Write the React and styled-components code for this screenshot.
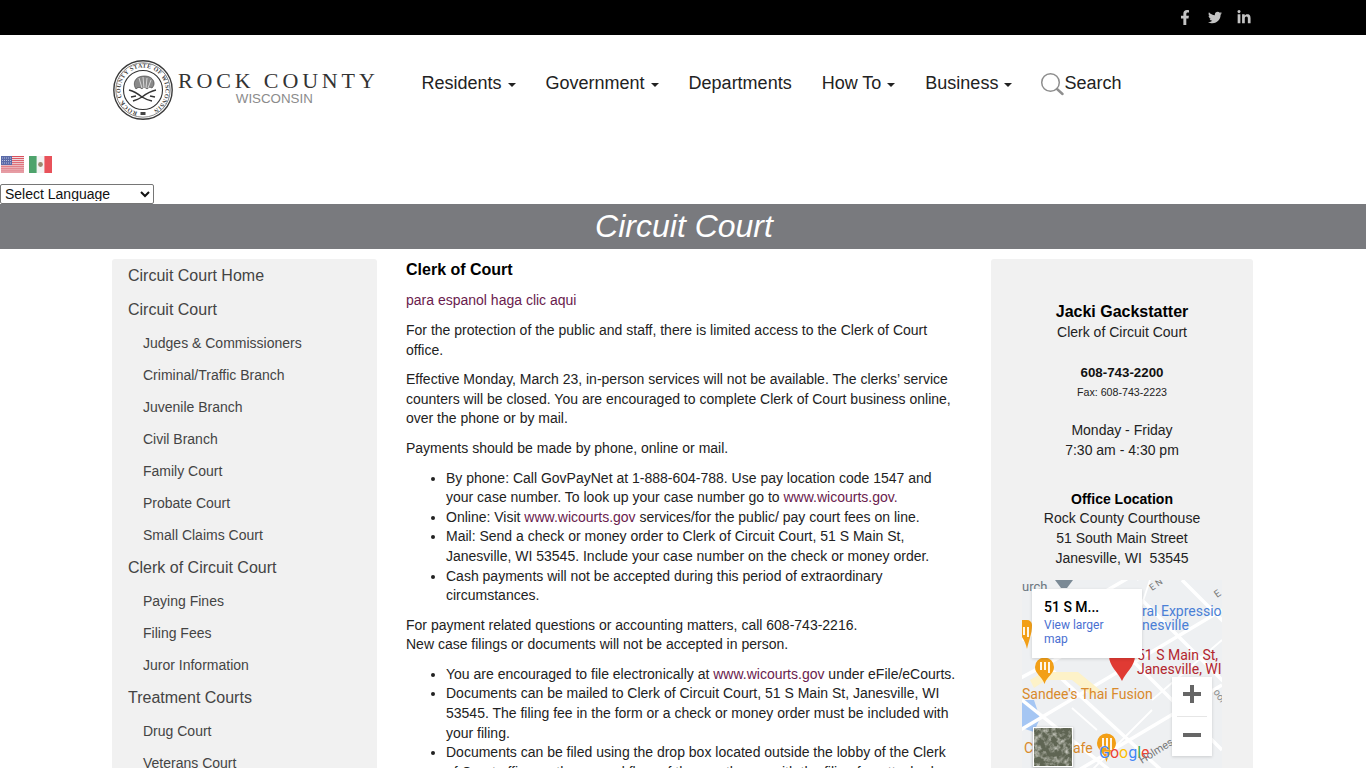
import React from 'react';
import styled, { createGlobalStyle } from 'styled-components';
import { FaFacebookF, FaTwitter, FaLinkedinIn } from 'react-icons/fa';

const GlobalStyle = createGlobalStyle`
  html, body {
    margin: 0;
    padding: 0;
    height: 100%;
    overflow: hidden;
    background: #fff;
  }
  body {
    font-family: "Liberation Sans", Arial, sans-serif;
    font-size: 14px;
    line-height: 1.4;
    color: #222;
  }
`;

const Page = styled.div`
  height: 768px;
  overflow: hidden;
`;

const TopBar = styled.div`
  height: 35px;
  background: #000;
  display: flex;
  justify-content: flex-end;
  align-items: center;
  gap: 15.5px;
  padding-right: 115px;
  color: #c4c4c4;
  font-size: 15px;
`;

const SocialLink = styled.a`
  display: flex;
  color: inherit;
  width: 14px;
  justify-content: center;
`;

const Header = styled.header`
  height: 97px;
  display: flex;
  align-items: center;
  padding-left: 113px;
`;

const Logo = styled.a`
  display: flex;
  align-items: center;
  width: 308.5px;
  flex: none;
  margin-top: 13px;
`;

const LogoText = styled.div`
  display: flex;
  flex-direction: column;
  align-items: center;
  margin-left: 5px;
  margin-top: -6px;
`;

const LogoTitle = styled.span`
  font-family: "Liberation Serif", serif;
  font-size: 22px;
  line-height: 23px;
  letter-spacing: 3.85px;
  color: #333;
  white-space: nowrap;
`;

const LogoSub = styled.span`
  font-size: 13.33px;
  line-height: 14px;
  color: #8b8b8b;
  margin-left: -8px;
`;

const Nav = styled.nav`
  display: flex;
  align-items: center;
  gap: 30px;
  font-size: 18px;
  color: #222;
`;

const NavItem = styled.a`
  display: flex;
  align-items: center;
  white-space: nowrap;
`;

const Caret = styled.span`
  display: inline-block;
  margin-left: 6px;
  margin-top: 2px;
  border-top: 4px solid #222;
  border-left: 4px solid transparent;
  border-right: 4px solid transparent;
`;

const SearchItem = styled(NavItem)`
  margin-left: -2px;
`;

const LanguageBar = styled.div`
  height: 72px;
  display: flex;
  flex-direction: column;
  justify-content: flex-end;
  align-items: flex-start;
`;

const Flags = styled.div`
  display: flex;
  gap: 5px;
  padding-left: 1px;
  margin-bottom: 11px;
`;

const LanguageSelect = styled.select`
  width: 154px;
  height: 20px;
  font-family: "Liberation Sans", Arial, sans-serif;
  font-size: 14px;
  line-height: 16px;
  padding: 0 0 2px;
  background: #fff;
  color: #111;
  border: 1px solid #767676;
  border-radius: 2px;
  display: block;
`;

const Banner = styled.div`
  height: 45px;
  background: #797a7e;
  color: #fff;
  font-size: 32px;
  font-style: italic;
  line-height: 45px;
  text-align: center;
  padding-left: 2px;
`;

const Columns = styled.div`
  display: grid;
  grid-template-columns: 265px 614px 262px;
  padding-left: 112px;
  padding-top: 10px;
  align-items: start;
`;

const SideMenu = styled.aside`
  background: #f1f1f1;
  border-radius: 3px;
  padding: 0 16px 30px;
`;

const MenuLink = styled.a`
  display: block;
  color: #444;
  font-size: ${(p) => (p.$sub ? '14px' : '16px')};
  line-height: ${(p) => (p.$sub ? '32px' : '34px')};
  padding-left: ${(p) => (p.$sub ? '15px' : '0')};
`;

const Main = styled.main`
  color: #222;
  padding: 1.4px 33px 0 29px;
`;

const Title = styled.h2`
  margin: 0 0 11px;
  font-size: 16px;
  line-height: 20px;
  font-weight: bold;
  color: #000;
`;

const Para = styled.p`
  margin: 0 0 10px;
`;

const BulletList = styled.ul`
  margin: 0 0 10px;
  padding-left: 40px;
`;

const TextLink = styled.a`
  color: #6a1b4d;
`;

const InfoPanel = styled.aside`
  background: #f1f1f1;
  border-radius: 3px;
  height: 600px;
  padding: 42px 31px 0;
  text-align: center;
`;

const InfoName = styled.div`
  font-size: 16px;
  font-weight: bold;
  line-height: 21.5px;
  color: #000;
`;

const InfoLine = styled.div`
  line-height: 19.6px;
  color: #222;
`;

const InfoGroup = styled.div`
  margin-bottom: ${(p) => p.$gap || 19}px;
`;

const Phone = styled.div`
  font-size: 13.33px;
  font-weight: bold;
  line-height: 20px;
  color: #111;
`;

const Fax = styled.div`
  font-size: 10.67px;
  line-height: 19.5px;
  color: #222;
`;

const InfoHeading = styled.div`
  font-weight: bold;
  line-height: 19.6px;
  color: #000;
`;

const MapBox = styled.div`
  position: relative;
  width: 200px;
  height: 200px;
  overflow: hidden;
  background: #eef0f2;
`;

const MapCard = styled.div`
  position: absolute;
  left: 10px;
  top: 9px;
  width: 110px;
  height: 69px;
  box-sizing: border-box;
  padding: 10px 12px;
  background: #fff;
  text-align: left;
  box-shadow: 0 1px 3px rgba(0, 0, 0, 0.15);
  font-family: Roboto, sans-serif;
`;

const MapCardTitle = styled.div`
  font-size: 14px;
  font-weight: 500;
  line-height: 16px;
  color: #000;
`;

const MapCardLink = styled.a`
  display: block;
  margin-top: 3px;
  font-size: 12px;
  line-height: 14px;
  color: #4a6fd1;
`;

const ZoomControl = styled.div`
  position: absolute;
  left: 150px;
  top: 97px;
  width: 40px;
  height: 79px;
  background: #fff;
  box-shadow: 0 1px 3px rgba(0, 0, 0, 0.15);
  display: flex;
  flex-direction: column;
  align-items: center;
`;

const ZoomButton = styled.div`
  height: 39px;
  width: 100%;
  box-sizing: border-box;
  padding-bottom: ${(p) => p.$lift}px;
  display: flex;
  align-items: center;
  justify-content: center;
`;

const ZoomDivider = styled.div`
  width: 30px;
  height: 1px;
  background: #e6e6e6;
`;

const Thumbnail = styled.div`
  position: absolute;
  left: 11px;
  top: 147px;
  width: 38px;
  height: 38px;
  border: 1px solid #fff;
  box-shadow: 0 1px 3px rgba(0, 0, 0, 0.3);
  overflow: hidden;
  display: flex;
`;

const menu = [
  ['Circuit Court Home'],
  ['Circuit Court', ['Judges & Commissioners', 'Criminal/Traffic Branch', 'Juvenile Branch', 'Civil Branch', 'Family Court', 'Probate Court', 'Small Claims Court']],
  ['Clerk of Circuit Court', ['Paying Fines', 'Filing Fees', 'Juror Information']],
  ['Treatment Courts', ['Drug Court', 'Veterans Court']],
];

const navItems = ['Residents', 'Government', 'Departments', 'How To', 'Business'];

// seal next to the county name
const Seal = () => (
  <svg width="60" height="60" viewBox="0 0 60 60">
    <defs>
      <path id="sealArc" d="M30 52.5 a22.5 22.5 0 1 1 0 -45 a22.5 22.5 0 1 1 0 45" />
    </defs>
    <circle cx="30" cy="30" r="29.2" fill="#fff" stroke="#3a3a3a" strokeWidth="1.4" />
    <circle cx="30" cy="30" r="27.2" fill="none" stroke="#555" strokeWidth="0.7" />
    <circle cx="30" cy="30" r="19.5" fill="#fff" stroke="#333" strokeWidth="1.1" />
    <text fontFamily="'Liberation Serif', serif" fontSize="6" fontWeight="bold" fill="#444">
      <textPath href="#sealArc" startOffset="4%" textLength="124" lengthAdjust="spacing">ROCK COUNTY STATE OF WISCONSIN</textPath>
    </text>
    <path d="M23 29c-3-4-2-10 3-12 5-2 12-1 14 3 2 3 1 6-1 8-2-1-3-1-5 1-2-2-4-2-5 0-2-2-4-2-6 0z" fill="#8a8a8a" stroke="#333" strokeWidth="0.6" />
    <path d="M26 18l3 10M30 17l1 11M34 18l-1 10M38 20l-3 8" stroke="#e8e8e8" strokeWidth="0.8" />
    <path d="M16 30c4 1 8 3 13 7 4-3 9-6 14-7M20 41c3-1 6-2 9-4 3 2 6 3 10 4M23 36l-5 1M37 36l5 1" fill="none" stroke="#333" strokeWidth="1.5" />
    <rect x="27.5" y="52" width="5" height="3" fill="#444" />
  </svg>
);

const UsFlag = () => (
  <svg width="23" height="17" viewBox="0 0 23 17">
    <rect width="23" height="17" fill="#f4f0f2" />
    {[0, 2, 4, 6, 8, 10, 12, 14, 16].map((y) => (
      <rect key={y} y={y * 1.03} width="23" height="1.1" fill="#d9505c" />
    ))}
    <rect width="11" height="9" fill="#5a6aa8" />
    <path d="M1 2h9M1 4.5h9M1 7h9" stroke="#cfd4ea" strokeWidth="0.8" strokeDasharray="1 1" />
  </svg>
);

const MxFlag = () => (
  <svg width="23" height="17" viewBox="0 0 23 17">
    <rect width="8" height="17" fill="#4ea36c" />
    <rect x="7.6" width="7.8" height="17" fill="#f3f3f3" />
    <rect x="15.4" width="7.6" height="17" fill="#e8525a" />
    <circle cx="11.5" cy="8.5" r="2.4" fill="#9a8a70" />
  </svg>
);

const SearchGlyph = () => (
  <svg width="24" height="24" viewBox="0 0 24 24" fill="none">
    <circle cx="10.5" cy="10.5" r="8.8" stroke="#8e8e8e" strokeWidth="1.5" />
    <path d="M17 17l5.5 5" stroke="#8e8e8e" strokeWidth="2.4" strokeLinecap="round" />
  </svg>
);

// hand-drawn copy of the embedded map tiles
const MapTiles = () => (
  <svg width="200" height="200" viewBox="0 0 200 200" style={{ display: 'block' }}>
    <rect width="200" height="200" fill="#eef0f2" />
    <path d="M0 120h12l6 18-6 14-12-4z" fill="#a5c6f3" />
    <g stroke="#fff" strokeWidth="3.5" fill="none">
      <path d="M-5 100L70 60M-5 152L200 30M40 200L200 105M0 60L120 -10" />
      <path d="M0 120L100 200M30 90L150 200M80 50L200 170M120 20L210 110M160 0L210 50" />
    </g>
    <g stroke="#fff" strokeWidth="1.8" fill="none">
      <path d="M115 0L125 -5M118 30L128 0M60 200L130 130M50 128L75 150M130 120L200 60" />
    </g>
    <path d="M8 100L22 92L56 92L78 110L70 116L50 100L24 100L12 108z" fill="#fdf2c8" />
    <path d="M33 0h18l-6 8h-6z" fill="#7b8a96" />
    <text x="0" y="11" fontFamily="Roboto, sans-serif" fontSize="13" fill="#6b7680">urch</text>
    <text x="130" y="11" fontFamily="Roboto, sans-serif" fontSize="9" fill="#777" transform="rotate(-35 130 11)">E N</text>
    <text x="195" y="18" fontFamily="Roboto, sans-serif" fontSize="10" fill="#777" transform="rotate(-35 195 18)">E</text>
    <text x="120" y="36" fontFamily="Roboto, sans-serif" fontSize="14" fill="#4a7fd6">ral Expression</text>
    <text x="120" y="50" fontFamily="Roboto, sans-serif" fontSize="14" fill="#4a7fd6">nesville</text>
    <text x="115" y="80" fontFamily="Roboto, sans-serif" fontSize="14" fill="#b3262e">51 S Main St,</text>
    <text x="115" y="94" fontFamily="Roboto, sans-serif" fontSize="14" fill="#b3262e">Janesville, WI</text>
    <text x="0" y="119" fontFamily="Roboto, sans-serif" fontSize="14" fill="#d98a2b">Sandee's Thai Fusion</text>
    <text x="2" y="173" fontFamily="Roboto, sans-serif" fontSize="14" fill="#d98a2b">Ca</text>
    <text x="51" y="173" fontFamily="Roboto, sans-serif" fontSize="14" fill="#d98a2b">afe</text>
    <path d="M0 40h5a5 5 0 0 1 5 5c0 9-3 15-5 24-1-5-3-9-5-12z" fill="#f29f17" />
    <path d="M2 47v8M6 47v10" stroke="#fff" strokeWidth="1.8" />
    <path d="M13 87a9.5 9.5 0 0 1 19 0c0 7-7 9-9.5 17-2.500-8-9.500-10-9.500-17z" fill="#f29f17" />
    <path d="M19 82v8M23 82v8M27 82v11" stroke="#fff" strokeWidth="1.8" />
    <path d="M75 163a9.500 9.500 0 0 1 19 0c0 7-7 9-9.500 19-2.500-10-9.500-12-9.500-19z" fill="#f29f17" />
    <path d="M81 158v9M85 158v9M89 158v12" stroke="#fff" strokeWidth="1.8" />
    <path d="M87 76L113 76C113 86 104 92 100 101C96 92 87 86 87 76z" fill="#e03a33" />
    <text fontFamily="Roboto, sans-serif" fontSize="16" y="178" x="77" stroke="#fff" strokeWidth="0.4" paintOrder="stroke">
      <tspan fill="#4285f4">G</tspan>
      <tspan fill="#ea4335">o</tspan>
      <tspan fill="#fbbc05">o</tspan>
      <tspan fill="#4285f4">g</tspan>
      <tspan fill="#34a853">l</tspan>
      <tspan fill="#ea4335">e</tspan>
    </text>
    <text x="120" y="184" fontFamily="Roboto, sans-serif" fontSize="11" fill="#777" transform="rotate(-32 120 184)">Holmes St</text>
    <text x="191" y="112" fontFamily="Roboto, sans-serif" fontSize="10" fill="#888" transform="rotate(55 191 112)">ool</text>
  </svg>
);

const SatelliteTile = () => (
  <svg width="38" height="38" viewBox="0 0 38 38">
    <filter id="satNoise">
      <feTurbulence type="fractalNoise" baseFrequency="0.17" numOctaves="3" seed="7" />
      <feColorMatrix values="0 0 0 0 0.74  0 0 0 0 0.74  0 0 0 0 0.68  2.2 0 0 0 -0.95" />
    </filter>
    <rect width="38" height="38" fill="#5f6553" />
    <rect width="38" height="38" filter="url(#satNoise)" />
  </svg>
);

const App = () => (
  <Page>
    <GlobalStyle />
    <TopBar>
      <SocialLink><FaFacebookF /></SocialLink>
      <SocialLink><FaTwitter /></SocialLink>
      <SocialLink><FaLinkedinIn /></SocialLink>
    </TopBar>

    <Header>
      <Logo>
        <Seal />
        <LogoText>
          <LogoTitle>ROCK COUNTY</LogoTitle>
          <LogoSub>WISCONSIN</LogoSub>
        </LogoText>
      </Logo>
      <Nav>
        {navItems.map((item) => (
          <NavItem key={item}>
            {item}
            {item !== 'Departments' && <Caret />}
          </NavItem>
        ))}
        <SearchItem><SearchGlyph />Search</SearchItem>
      </Nav>
    </Header>

    <LanguageBar>
      <Flags>
        <UsFlag />
        <MxFlag />
      </Flags>
      <LanguageSelect defaultValue="">
        <option value="">Select Language</option>
        <option value="es">Spanish</option>
      </LanguageSelect>
    </LanguageBar>

    <Banner>Circuit Court</Banner>

    <Columns>
      <SideMenu>
        {menu.map(([label, children]) => (
          <React.Fragment key={label}>
            <MenuLink>{label}</MenuLink>
            {children && children.map((child) => <MenuLink $sub key={child}>{child}</MenuLink>)}
          </React.Fragment>
        ))}
      </SideMenu>

      <Main>
        <Title>Clerk of Court</Title>
        <Para><TextLink>para espanol haga clic aqui</TextLink></Para>
        <Para>For the protection of the public and staff, there is limited access to the Clerk of Court office.</Para>
        <Para>Effective Monday, March 23, in-person services will not be available. The clerks’ service counters will be closed. You are encouraged to complete Clerk of Court business online, over the phone or by mail.</Para>
        <Para>Payments should be made by phone, online or mail.</Para>
        <BulletList>
          <li>By phone: Call GovPayNet at 1-888-604-788. Use pay location code 1547 and your case number. To look up your case number go to <TextLink>www.wicourts.gov.</TextLink></li>
          <li>Online: Visit <TextLink>www.wicourts.gov</TextLink> services/for the public/ pay court fees on line.</li>
          <li>Mail: Send a check or money order to Clerk of Circuit Court, 51 S Main St, Janesville, WI 53545. Include your case number on the check or money order.</li>
          <li>Cash payments will not be accepted during this period of extraordinary circumstances.</li>
        </BulletList>
        <Para>For payment related questions or accounting matters, call 608-743-2216.<br />New case filings or documents will not be accepted in person.</Para>
        <BulletList>
          <li>You are encouraged to file electronically at <TextLink>www.wicourts.gov</TextLink> under eFile/eCourts.</li>
          <li>Documents can be mailed to Clerk of Circuit Court, 51 S Main St, Janesville, WI 53545. The filing fee in the form or a check or money order must be included with your filing.</li>
          <li>Documents can be filed using the drop box located outside the lobby of the Clerk of Court office on the second floor of the courthouse with the filing fee attached.</li>
        </BulletList>
      </Main>

      <InfoPanel>
        <InfoGroup $gap={20.5}>
          <InfoName>Jacki Gackstatter</InfoName>
          <InfoLine>Clerk of Circuit Court</InfoLine>
        </InfoGroup>
        <InfoGroup $gap={19}>
          <Phone>608-743-2200</Phone>
          <Fax>Fax: 608-743-2223</Fax>
        </InfoGroup>
        <InfoGroup $gap={29.5}>
          <InfoLine>Monday - Friday</InfoLine>
          <InfoLine>7:30 am - 4:30 pm</InfoLine>
        </InfoGroup>
        <InfoGroup $gap={11.5}>
          <InfoHeading>Office Location</InfoHeading>
          <InfoLine>Rock County Courthouse</InfoLine>
          <InfoLine>51 South Main Street</InfoLine>
          <InfoLine>Janesville, WI&nbsp; 53545</InfoLine>
        </InfoGroup>
        <MapBox>
          <MapTiles />
          <MapCard>
            <MapCardTitle>51 S M...</MapCardTitle>
            <MapCardLink>View larger map</MapCardLink>
          </MapCard>
          <ZoomControl>
            <ZoomButton $lift={4}>
              <svg width="20" height="20" viewBox="0 0 20 20"><path d="M1 10h18M10 1v18" stroke="#666" strokeWidth="4" /></svg>
            </ZoomButton>
            <ZoomDivider />
            <ZoomButton $lift={2}>
              <svg width="20" height="20" viewBox="0 0 20 20"><path d="M1 10h18" stroke="#666" strokeWidth="4" /></svg>
            </ZoomButton>
          </ZoomControl>
          <Thumbnail><SatelliteTile /></Thumbnail>
        </MapBox>
      </InfoPanel>
    </Columns>
  </Page>
);

export default App;
